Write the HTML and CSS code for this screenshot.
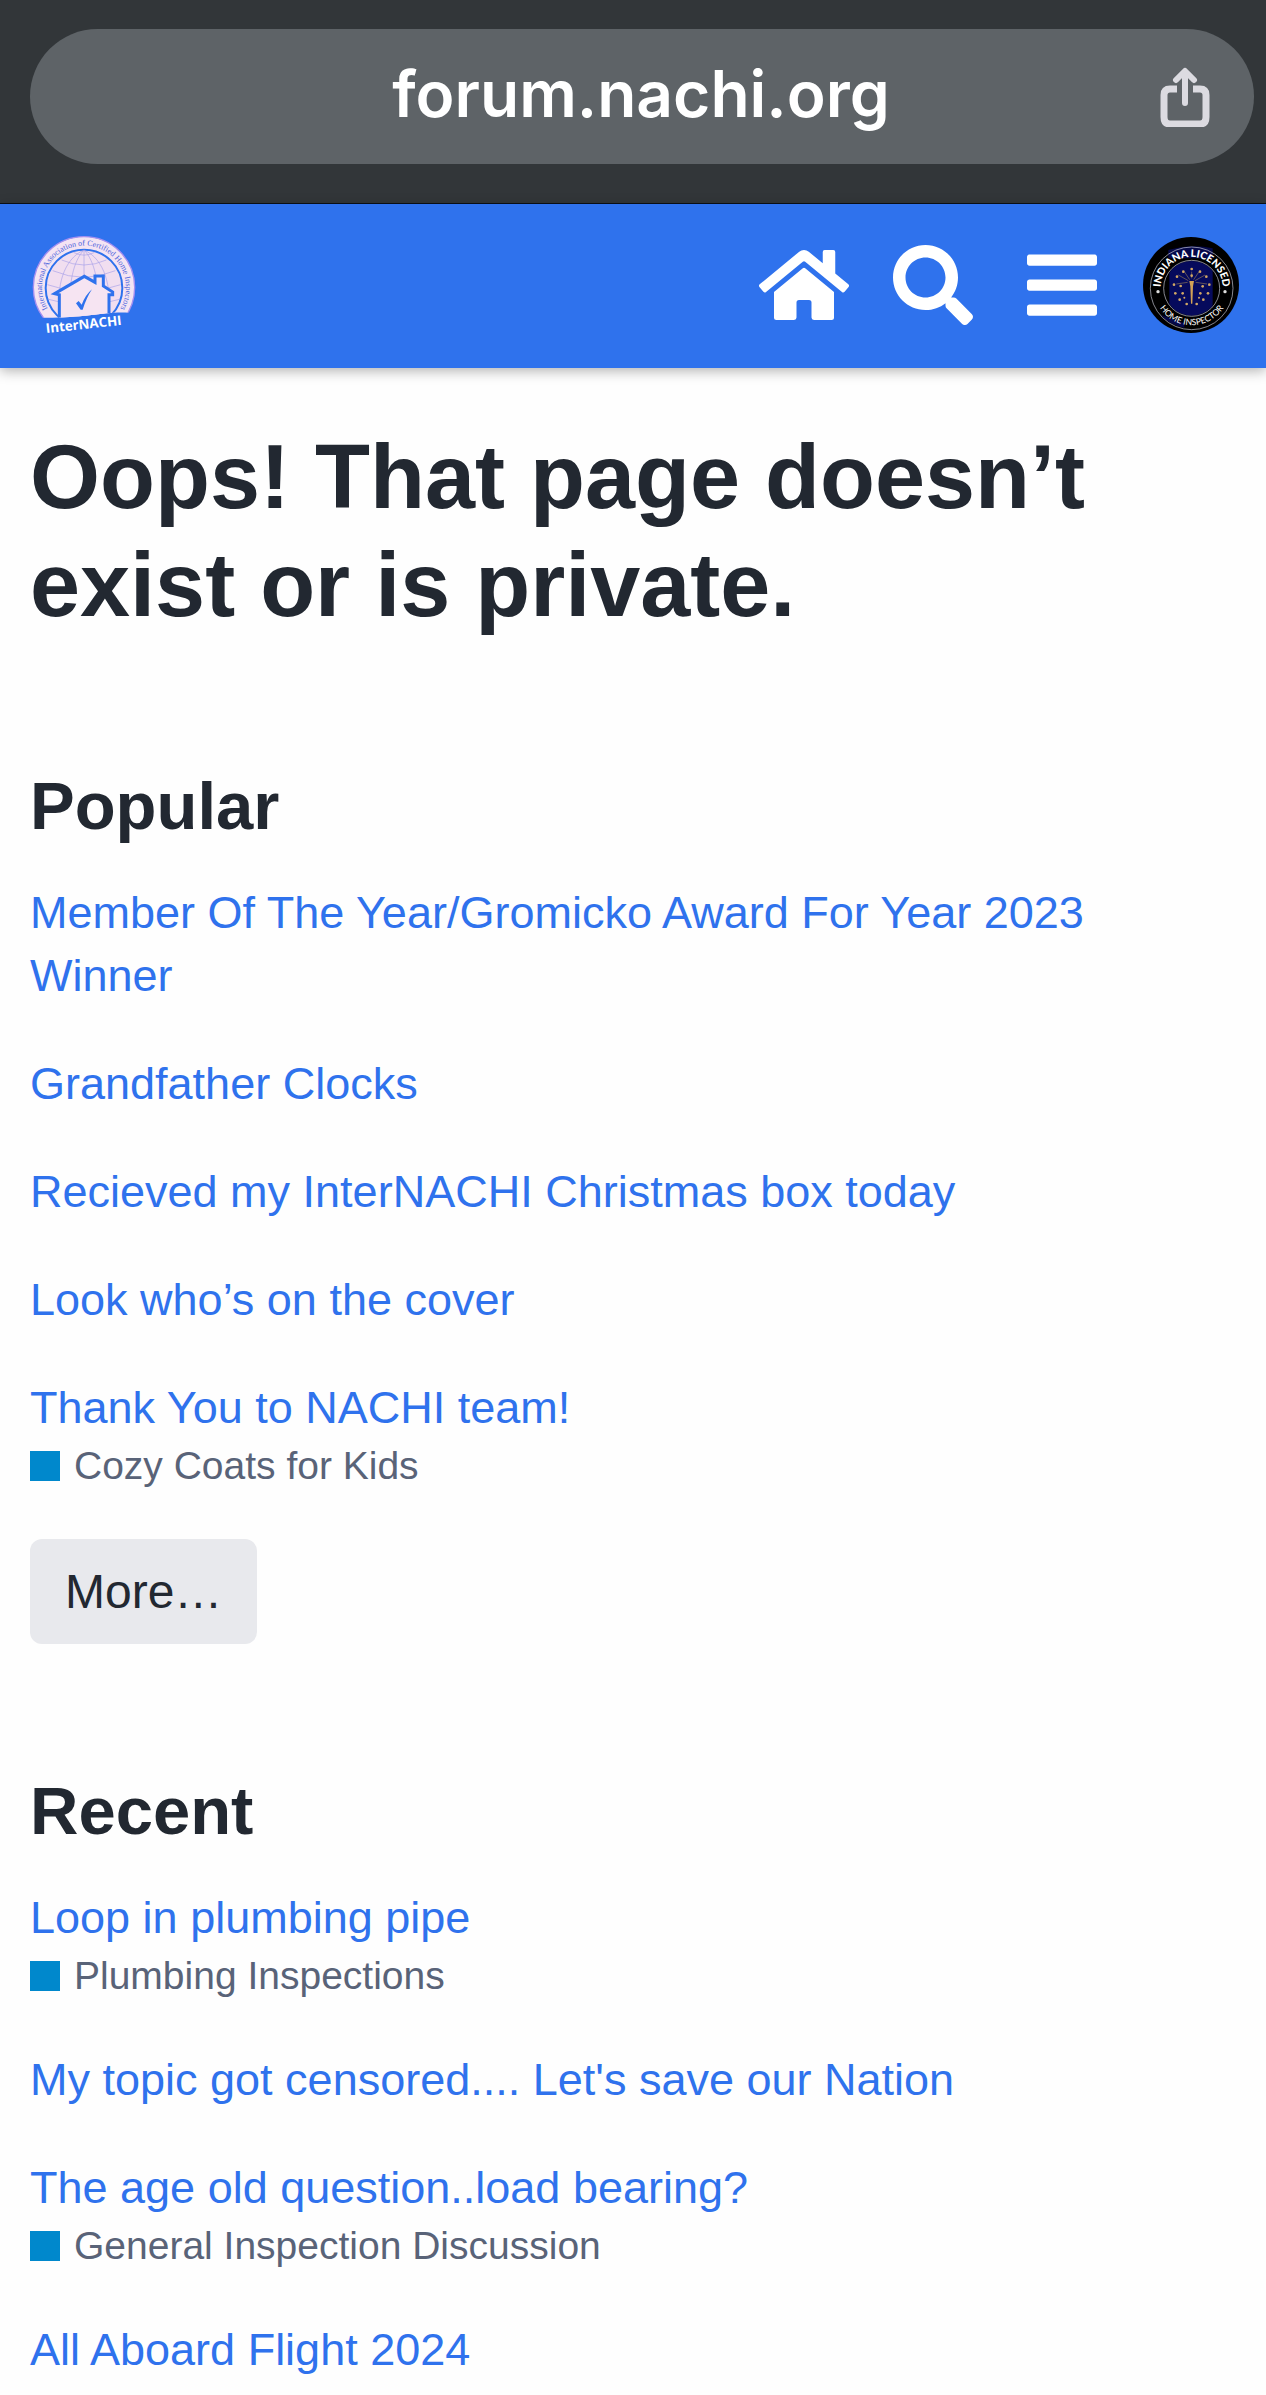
FILE: index.html
```html
<!DOCTYPE html>
<html lang="en">

<head>
  <meta charset="UTF-8">
  <meta name="viewport" content="width=device-width, initial-scale=1.0">
  <title>InterNACHI Forum</title>
  <link rel="stylesheet" href="styles.css">
</head>

<body>
  <!-- Browser address bar -->
  <div class="browser-bar">
    <div class="address">
      <input type="text" class="address-input" value="forum.nachi.org" aria-label="Address">
      <button type="button" class="share-btn" aria-label="Share">
        <svg viewBox="0 0 50 60" width="50" height="60" fill="none" stroke="#dcdbe1" stroke-width="7" stroke-linecap="round" stroke-linejoin="round">
          <path d="M17 22H10Q4 22 4 28V50Q4 57 10 57H40Q46 57 46 50V28Q46 22 40 22H33" stroke-linecap="butt" />
          <path d="M25 36V5M16 13L25 4L34 13" stroke-width="6" />
        </svg>
      </button>
    </div>
  </div>

  <!-- Site header -->
  <header class="site-header">
    <a href="#" class="logo-link" aria-label="InterNACHI">
      <svg class="logo" viewBox="36 36 312 294" width="104" height="98">
        <defs>
          <path id="logo-arc" d="M113 289A126 126 0 1 1 271 289" />
          <path id="logo-base" d="M79 327L339 299" />
          <clipPath id="logo-top">
            <path d="M30 30H350V270C280 254 200 284 60 281L30 270Z" />
          </clipPath>
        </defs>
        <g clip-path="url(#logo-top)">
          <circle cx="192" cy="190" r="152" fill="#f4e4f3" stroke="#a58ff0" stroke-width="4" />
          <circle cx="192" cy="192" r="115" fill="#f1def0" stroke="#2f72ed" stroke-width="6" />
          <g fill="none" stroke="#a9a2e8" stroke-width="2">
            <path d="M192 78V300M192 78C130 105 108 190 120 270M192 78C254 105 276 190 264 270M192 78C160 110 145 180 150 270M192 78C224 110 239 180 234 270" />
            <path d="M160 85Q192 102 224 85M125 108Q192 138 259 108M98 140Q192 180 286 140M82 182Q192 222 302 182M86 226Q192 260 298 226" />
          </g>
          <path d="M104 209L193 157L225 175V156H250V186L278 204V212H267V290H118V212Z" fill="#f6e4f2" stroke="#2f72ed" stroke-width="9" />
          <path d="M168 238L176 231L185 242Q196 213 216 196Q200 220 188 257H182Z" fill="#2f72ed" />
        </g>
        <text class="logo-ring"><textPath href="#logo-arc" startOffset="50%">International Association of Certified Home Inspectors</textPath></text>
        <text class="logo-name"><textPath href="#logo-base">InterNACHI</textPath></text>
      </svg>
    </a>

    <nav class="header-icons">
      <a href="#" aria-label="Home">
        <svg class="icon" viewBox="0 0 576 512" width="90" height="80">
          <path d="M280.37 148.26L96 300.11V464a16 16 0 0 0 16 16l112.06-.29a16 16 0 0 0 15.92-16V368a16 16 0 0 1 16-16h64a16 16 0 0 1 16 16v95.64a16 16 0 0 0 16 16.05L464 480a16 16 0 0 0 16-16V300L295.67 148.26a12.19 12.19 0 0 0-15.3 0zM571.6 251.47L488 182.56V44.05a12 12 0 0 0-12-12h-56a12 12 0 0 0-12 12v72.61L318.47 43a48 48 0 0 0-61 0L4.34 251.47a12 12 0 0 0-1.6 16.9l25.5 31A12 12 0 0 0 45.15 301l235.22-193.74a12.19 12.19 0 0 1 15.3 0L530.9 301a12 12 0 0 0 16.9-1.6l25.5-31a12 12 0 0 0-1.7-16.93z" />
        </svg>
      </a>
      <button type="button" aria-label="Search">
        <svg class="icon" viewBox="0 0 512 512" width="80" height="80">
          <path d="M505 442.7L405.3 343c-4.5-4.5-10.6-7-17-7H372c27.6-35.3 44-79.7 44-128C416 93.1 322.9 0 208 0S0 93.1 0 208s93.1 208 208 208c48.3 0 92.7-16.4 128-44v16.3c0 6.4 2.5 12.5 7 17l99.7 99.7c9.4 9.4 24.6 9.4 33.9 0l28.3-28.3c9.4-9.4 9.4-24.6.1-34zM208 336c-70.7 0-128-57.2-128-128 0-70.7 57.2-128 128-128 70.7 0 128 57.2 128 128 0 70.7-57.2 128-128 128z" />
        </svg>
      </button>
      <button type="button" aria-label="Menu">
        <svg class="icon" viewBox="0 0 448 512" width="70" height="80">
          <path d="M16 132h416c8.837 0 16-7.163 16-16V76c0-8.837-7.163-16-16-16H16C7.163 60 0 67.163 0 76v40c0 8.837 7.163 16 16 16zm0 160h416c8.837 0 16-7.163 16-16v-40c0-8.837-7.163-16-16-16H16c-8.837 0-16 7.163-16 16v40c0 8.837 7.163 16 16 16zm0 160h416c8.837 0 16-7.163 16-16v-40c0-8.837-7.163-16-16-16H16c-8.837 0-16 7.163-16 16v40c0 8.837 7.163 16 16 16z" />
        </svg>
      </button>
      <button type="button" aria-label="Profile">
        <svg class="avatar" viewBox="36 36 288 288" width="96" height="96">
          <defs>
            <path id="badge-top" d="M91 208A93 93 0 1 1 273 208" />
            <path id="badge-bottom" d="M70 208A114 114 0 0 0 294 208" />
            <clipPath id="badge-inner">
              <circle cx="182" cy="190" r="82" />
            </clipPath>
          </defs>
          <circle cx="180" cy="180" r="144" fill="#000" />
          <path d="M112 75Q180 55 245 70V100H112ZM90 270L160 295V308Q115 300 90 270Z" fill="#05084a" />
          <rect x="115" y="100" width="130" height="180" fill="#060a5c" clip-path="url(#badge-inner)" />
          <g fill="none" stroke="#c9cad8" stroke-width="2">
            <circle cx="182" cy="190" r="124" />
            <circle cx="182" cy="190" r="84" />
          </g>
          <circle cx="81" cy="200" r="5" fill="#ddd" />
          <circle cx="282" cy="200" r="5" fill="#ddd" />
          <!-- torch, rays and stars -->
          <path d="M175 168H189L186 184L184 236H180L178 184Z" fill="#d2a256" />
          <path d="M182 160V140M176 164L160 140M188 164L204 140M172 167L142 150M192 167L222 150M170 172L136 177M194 172L228 177" stroke="#8d7558" stroke-width="2" fill="none" />
          <g fill="#d2a865">
            <circle cx="182" cy="132" r="4" /><circle cx="182" cy="152" r="4" />
            <circle cx="157" cy="140" r="4" /><circle cx="207" cy="140" r="4" />
            <circle cx="138" cy="155" r="4" /><circle cx="226" cy="155" r="4" />
            <circle cx="129" cy="179" r="4" /><circle cx="235" cy="179" r="4" />
            <circle cx="149" cy="183" r="4" /><circle cx="215" cy="184" r="4" />
            <circle cx="133" cy="205" r="4" /><circle cx="231" cy="205" r="4" />
            <circle cx="155" cy="205" r="4" /><circle cx="208" cy="205" r="4" />
            <circle cx="146" cy="224" r="4" /><circle cx="217" cy="224" r="4" />
            <circle cx="167" cy="237" r="4" /><circle cx="197" cy="237" r="4" />
            <circle cx="160" cy="218" r="3" /><circle cx="204" cy="218" r="3" />
          </g>
          <text class="badge-title"><textPath href="#badge-top" startOffset="50%">INDIANA LICENSED</textPath></text>
          <text class="badge-sub"><textPath href="#badge-bottom" startOffset="50%">HOME INSPECTOR</textPath></text>
        </svg>
      </button>
    </nav>
  </header>

  <!-- Page not found -->
  <main class="content">
    <h1>Oops! That page doesn’t exist or is private.</h1>

    <section class="topics">
      <h2>Popular</h2>
      <ul>
        <li><a href="#">Member Of The Year/Gromicko Award For Year 2023 Winner</a></li>
        <li><a href="#">Grandfather Clocks</a></li>
        <li><a href="#">Recieved my InterNACHI Christmas box today</a></li>
        <li><a href="#">Look who’s on the cover</a></li>
        <li>
          <a href="#">Thank You to NACHI team!</a>
          <a href="#" class="category">Cozy Coats for Kids</a>
        </li>
      </ul>
      <button type="button" class="btn">More…</button>
    </section>

    <section class="topics">
      <h2>Recent</h2>
      <ul>
        <li>
          <a href="#">Loop in plumbing pipe</a>
          <a href="#" class="category">Plumbing Inspections</a>
        </li>
        <li><a href="#">My topic got censored.... Let's save our Nation</a></li>
        <li>
          <a href="#">The age old question..load bearing?</a>
          <a href="#" class="category">General Inspection Discussion</a>
        </li>
        <li><a href="#">All Aboard Flight 2024</a></li>
      </ul>
    </section>
  </main>
</body>

</html>
```
FILE: styles.css
```css
/* Reset and base styles */
* {
  box-sizing: border-box;
}

body,
ul,
h1,
h2 {
  margin: 0;
  padding: 0;
  list-style: none;
}

body {
  background: #fefefe;
  color: #222831;
  font-family: 'Liberation Sans', Arial, sans-serif;
  font-size: 45px;
  line-height: 63px;
}

a {
  color: #2f72ed;
  text-decoration: none;
}

button {
  border: none;
  background: none;
  padding: 0;
  font-family: inherit;
  cursor: pointer;
}

svg {
  display: block;
}

/* Browser address bar */
.browser-bar {
  background: #323639;
  border-bottom: 1px solid #0b1018;
  padding: 29px 12px 39px 30px;
}

.address {
  display: grid;
  grid-template-columns: 94px 1fr 94px;
  align-items: center;
  height: 135px;
  border-radius: 68px;
  background: #5e6367;
}

.address-input {
  grid-column: 2;
  width: 100%;
  border: none;
  background: none;
  padding: 0 2px 6px 0;
  color: #fff;
  font-family: Inter, sans-serif;
  font-size: 64px;
  font-weight: 600;
  text-align: center;
}

/* Header styles */
.site-header {
  display: flex;
  align-items: center;
  justify-content: space-between;
  height: 164px;
  padding: 0 11px 2px 32px;
  background: #2f72ed;
  box-shadow: 0 3px 12px rgba(0, 0, 0, 0.3);
}

.logo {
  overflow: visible;
}

.logo-ring {
  fill: #4a63dc;
  font-family: 'Liberation Serif', serif;
  font-size: 24px;
  text-anchor: middle;
}

.logo-name {
  fill: #fff;
  font-family: 'Open Sans', sans-serif;
  font-size: 40px;
  font-weight: 700;
}

.header-icons {
  display: flex;
}

.header-icons a,
.header-icons button {
  display: flex;
  align-items: center;
  justify-content: center;
  width: 129px;
}

.icon {
  fill: #fff;
}

.badge-title,
.badge-sub {
  fill: #fff;
  font-family: Lato, sans-serif;
  text-anchor: middle;
}

.badge-title {
  font-size: 31px;
  font-weight: 900;
}

.badge-sub {
  font-size: 26px;
}

/* Main content styles */
.content {
  padding: 55px 30px 14px;
}

h1 {
  font-size: 90px;
  line-height: 108px;
}

.topics {
  margin-top: 126px;
}

h2 {
  margin-bottom: 34px;
  font-size: 67px;
  line-height: 82px;
}

.topics ul {
  display: flex;
  flex-direction: column;
  gap: 45px;
}

.topics li a {
  display: block;
}

.topics li .category {
  display: flex;
  align-items: center;
  gap: 14px;
  color: #596378;
  font-size: 39px;
  line-height: 54px;
}

.category::before {
  content: "";
  width: 30px;
  height: 30px;
  background: #0088cc;
}

.btn {
  margin-top: 46px;
  padding: 0 35px;
  border-radius: 12px;
  background: #e8e9ed;
  color: #222831;
  font-size: 48px;
  line-height: 105px;
}
```
